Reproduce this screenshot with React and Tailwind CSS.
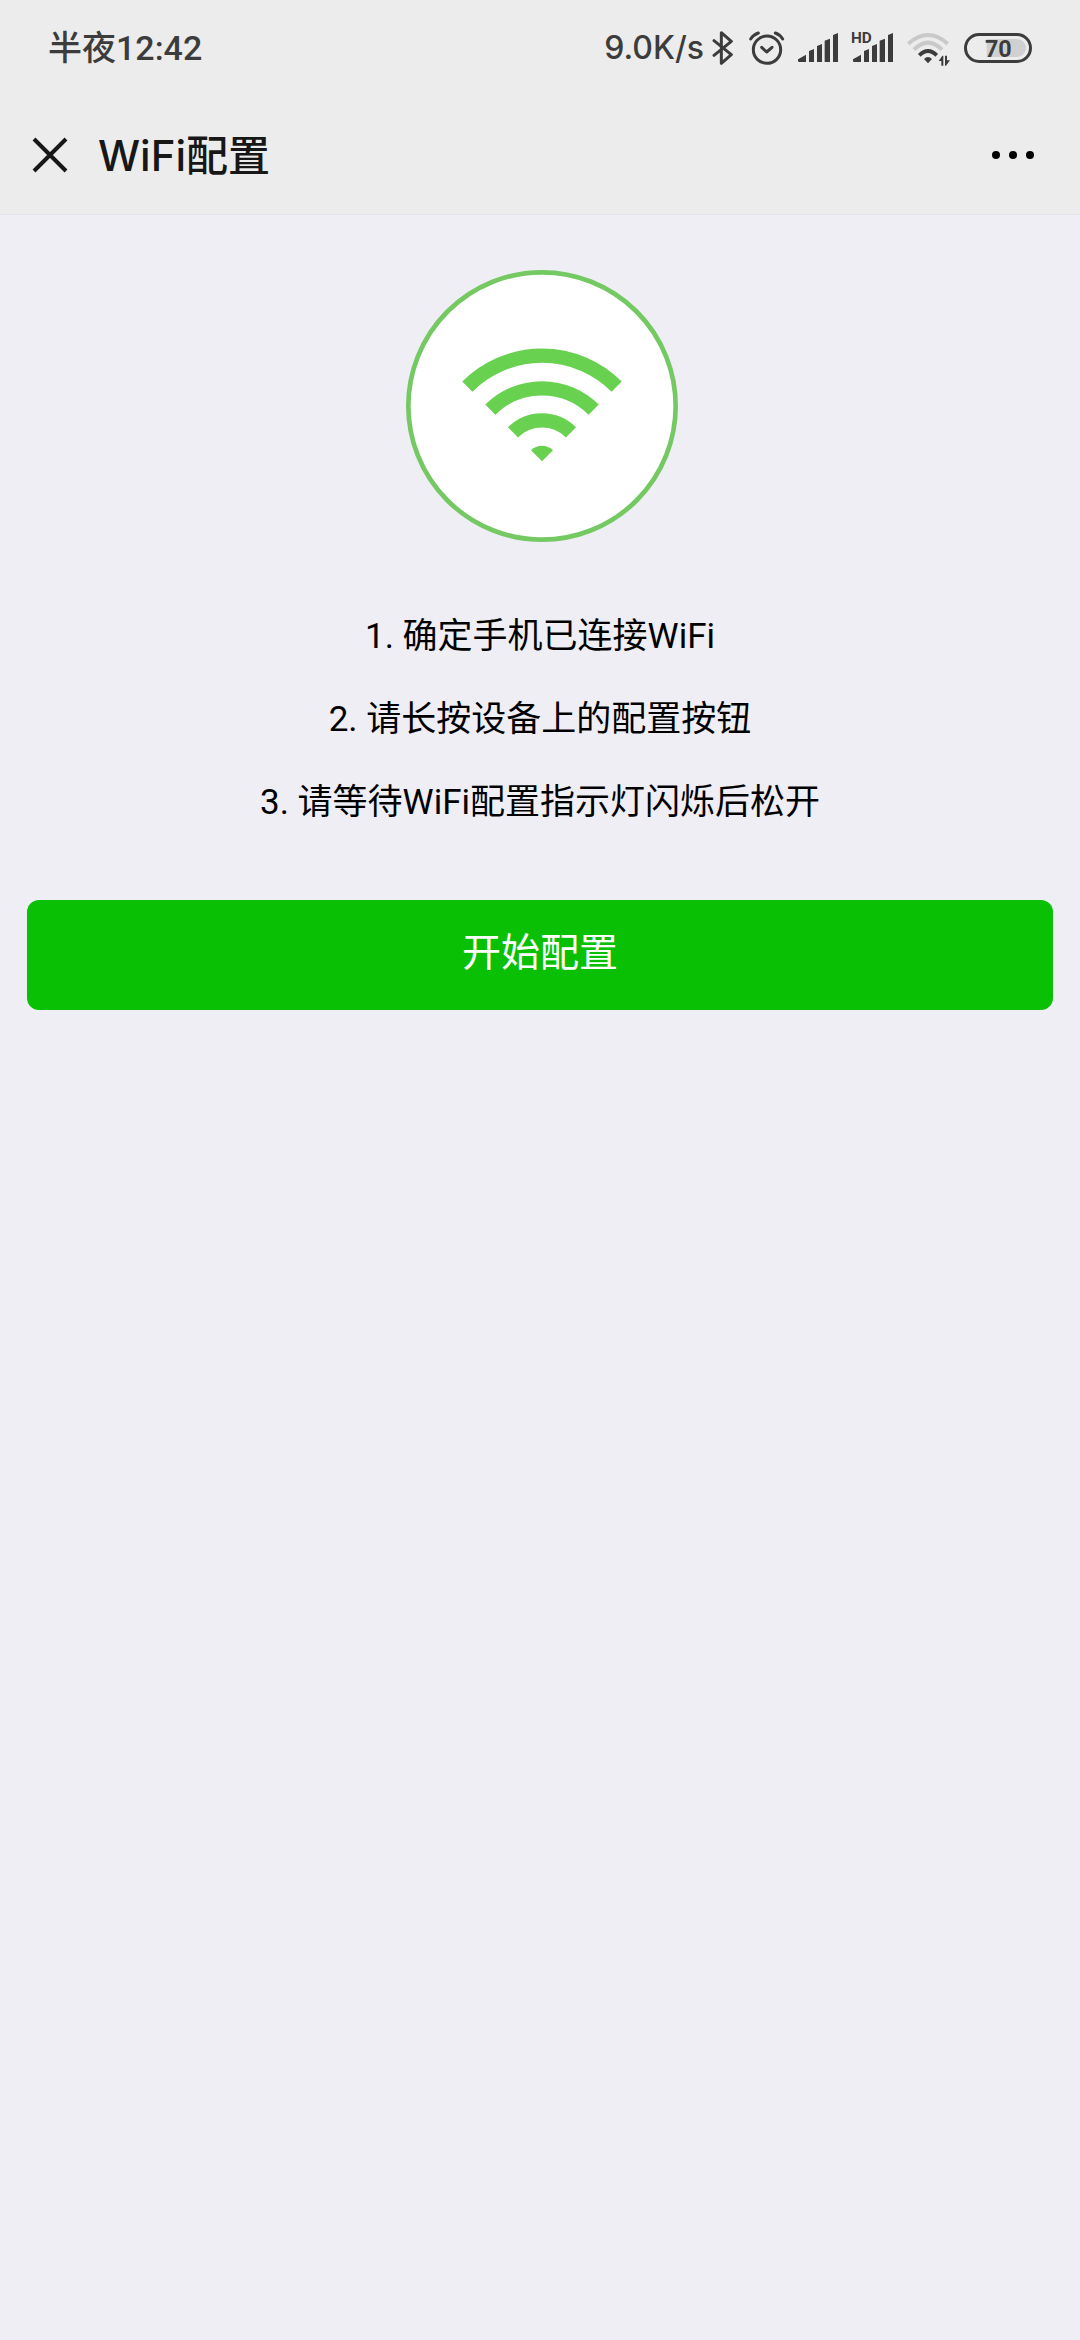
const steps = [
    "确定手机已连接WiFi",
    "请长按设备上的配置按钮",
    "请等待WiFi配置指示灯闪烁后松开",
];

const BluetoothIcon = () => (
    <svg viewBox="0 0 66 108" className="w-[22px] h-9" fill="none" stroke="currentColor" strokeWidth="9" strokeLinecap="round" strokeLinejoin="round">
        <path d="M6 32 L58 74 L28 100 V8 L58 34 L6 76" />
    </svg>
);

const AlarmIcon = () => (
    <svg viewBox="0 0 111 108" className="w-[37px] h-9" fill="none" stroke="currentColor" strokeWidth="9" strokeLinecap="round" strokeLinejoin="round">
        <circle cx="57" cy="59" r="41" />
        <path d="M8 27 Q17 14 31 9 M82 9 Q96 14 104 27 M41 52 L56 66 L72 52" />
    </svg>
);

const SignalBars = () => (
    <path d="M0 88 L24 74 V96 H3 Q0 96 0 93 Z M33 63 L48 57 V96 H33 Z M57 48 L72 42 V96 H57 Z M80 32 L96 26 V96 H80 Z M105 15 L120 9 V96 H105 Z" />
);

const SignalIcon = () => (
    <svg viewBox="0 0 120 108" className="w-10 h-9" fill="currentColor">
        <SignalBars />
    </svg>
);

const HdSignalIcon = () => (
    <svg viewBox="0 0 126 108" className="w-[42px] h-9 overflow-visible" fill="currentColor">
        <g transform="translate(6 0)">
            <SignalBars />
        </g>
        <text x="0" y="39" fontSize="46" fontWeight="700" fontFamily="Roboto, sans-serif">HD</text>
    </svg>
);

const WifiStatusIcon = () => (
    <svg viewBox="0 0 135 108" className="w-[45px] h-9" fill="none" strokeWidth="12">
        <path d="M7 41 Q66 -11 125 41" stroke="#c9c9c9" />
        <path d="M24 59 Q66 17 108 59" stroke="#c9c9c9" />
        <path d="M40 76 Q66 50 92 76" stroke="currentColor" />
        <path d="M54 87 Q66 75 78 87 L66 100 Z" fill="currentColor" />
        <path d="M98 93 L109 77 H112 V107 H106 V93 Z M117 77 H123 V91 H132 L120 107 H117 Z" fill="currentColor" />
    </svg>
);

const BatteryIcon = () => (
    <svg viewBox="0 0 204 108" className="w-[68px] h-9">
        <rect x="4.5" y="13.5" width="195" height="81" rx="40.5" fill="none" stroke="currentColor" strokeWidth="9" />
        <path d="M68 27 H159 A27 27 0 0 1 159 81 H68 Z" fill="#d0d0d0" />
        <text x="103" y="80" textAnchor="middle" fontSize="70" fontWeight="700" fontFamily="Roboto, sans-serif" fill="currentColor">70</text>
    </svg>
);

const WifiLogo = () => (
    <svg viewBox="0 0 816 816" className="w-[272px] h-[272px]" fill="none">
        <circle cx="408" cy="408" r="401" fill="#fff" stroke="#74c963" strokeWidth="14" />
        <g stroke="#68d14f" strokeWidth="43">
            <path d="M184 350 A316.5 316.5 0 0 1 632 350" />
            <path d="M253 419 A219.5 219.5 0 0 1 563 419" />
            <path d="M321 487 A123.5 123.5 0 0 1 495 487" />
        </g>
        <path d="M408 574 L375 541 A47 47 0 0 1 441 541 Z" fill="#68d14f" />
    </svg>
);

const StatusBar = () => (
    <div className="flex items-center justify-between h-24 px-12 text-[#3c3c3c] font-medium">
        <span className="text-[34px] font-[Roboto,'Noto_Sans_CJK_SC',sans-serif]">半夜12:42</span>
        <div className="flex items-center">
            <span className="text-[32px] mr-2">9.0K/s</span>
            <BluetoothIcon />
            <div className="flex items-center gap-[13px] ml-[14px]">
                <AlarmIcon />
                <SignalIcon />
                <HdSignalIcon />
                <WifiStatusIcon />
                <BatteryIcon />
            </div>
        </div>
    </div>
);

const TitleBar = () => (
    <div className="flex items-center h-[118px] pl-8 pr-[46px] text-[#171717]">
        <button type="button" aria-label="关闭">
            <svg viewBox="0 0 36 36" className="w-9 h-9" fill="none" stroke="currentColor" strokeWidth="4">
                <path d="M2 2 L34 34 M34 2 L2 34" />
            </svg>
        </button>
        <h1 className="ml-[30px] text-[42px] font-medium">WiFi配置</h1>
        <button type="button" aria-label="更多" className="ml-auto">
            <svg viewBox="0 0 42 8" className="w-[42px] h-2" fill="#000">
                <circle cx="4" cy="4" r="4" />
                <circle cx="21" cy="4" r="4" />
                <circle cx="38" cy="4" r="4" />
            </svg>
        </button>
    </div>
);

const App = () => {
    return (
        <div className="min-h-screen bg-[#efeef5] font-[Roboto,'Noto_Sans_CJK_SC',sans-serif]">
            <header className="bg-[#ececec] border-b border-[#e4e4e8] font-[Inter,'Noto_Sans_CJK_SC',sans-serif]">
                <StatusBar />
                <TitleBar />
            </header>

            <main className="px-[27px] pt-[55px]">
                <div className="flex justify-center pl-1">
                    <WifiLogo />
                </div>

                {/* Setup steps */}
                <ol className="mt-[53px] text-center text-[35px] leading-[83px] text-black">
                    {steps.map((step, index) => (
                        <li key={step}>{index + 1}. {step}</li>
                    ))}
                </ol>

                <button
                    type="button"
                    className="block w-full h-[110px] mt-14 pb-1 rounded-xl bg-[#09c004] text-white text-[39px]"
                >
                    开始配置
                </button>
            </main>
        </div>
    );
};

export default App;
